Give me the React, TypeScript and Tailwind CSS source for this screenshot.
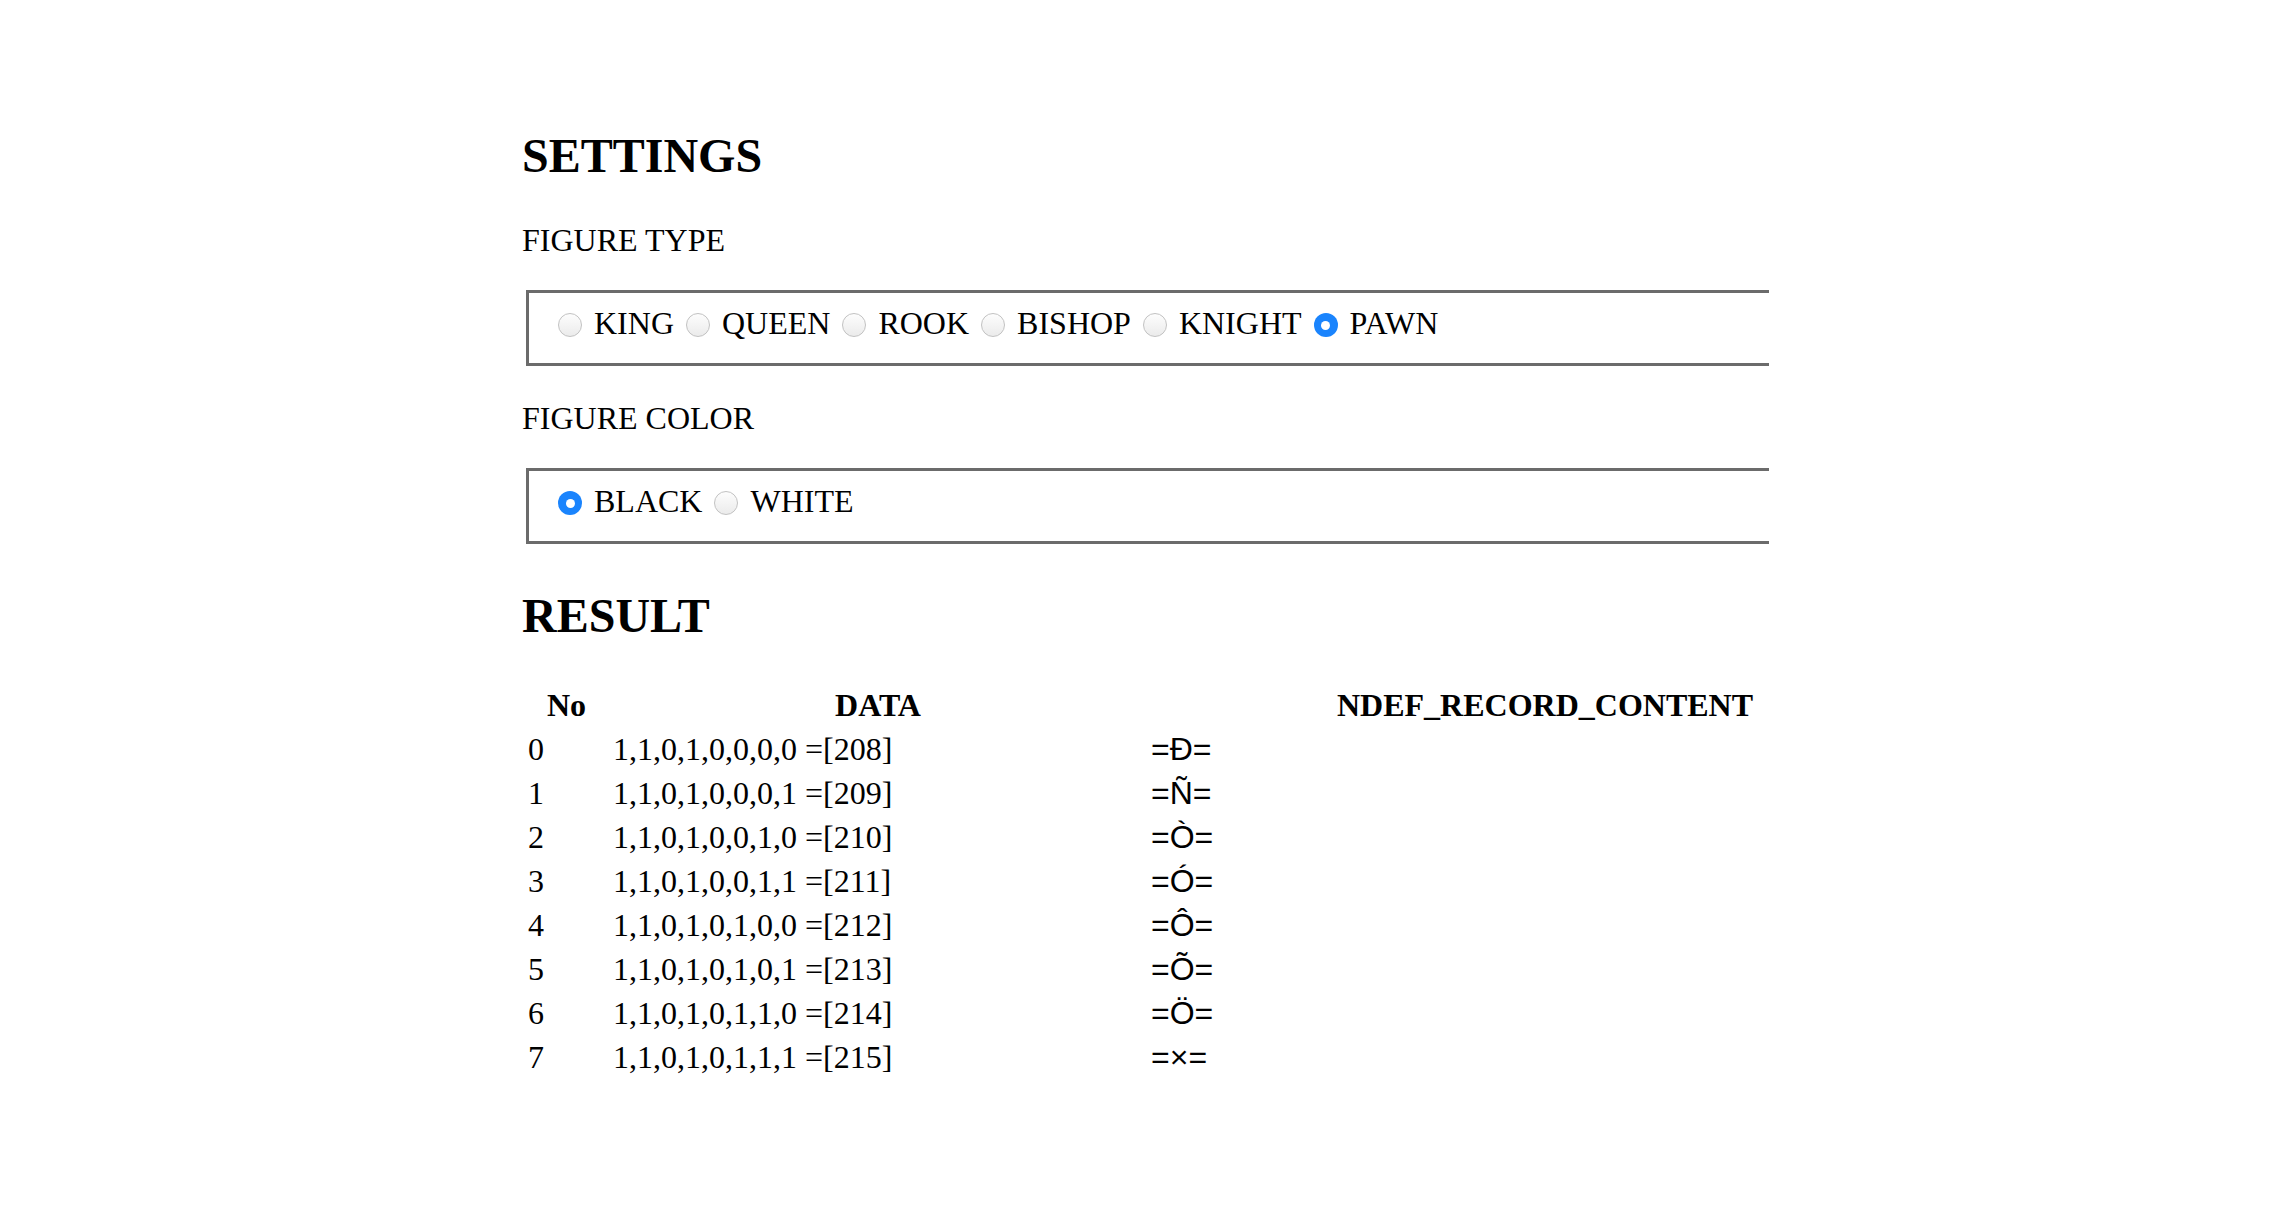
import React from "react";

function Radio({ checked }: { checked?: boolean }) {
  return checked ? (
    <span className="flex h-[24px] w-[24px] shrink-0 items-center justify-center rounded-full bg-[#1a84fd]">
      <span className="block h-[9px] w-[9px] rounded-full bg-white" />
    </span>
  ) : (
    <span className="block h-[24px] w-[24px] shrink-0 rounded-full border border-[#c2c2c2] bg-[linear-gradient(#fdfdfd,#ebebeb)]" />
  );
}

function Option({ label, checked }: { label: string; checked?: boolean }) {
  return (
    <label className="mr-[12px] flex items-center">
      <span className="mt-[4px] mr-[12px] flex shrink-0 items-center">
        <Radio checked={checked} />
      </span>
      <span>{label}</span>
    </label>
  );
}

function Group({ items, selected }: { items: string[]; selected: string }) {
  return (
    <div className="mt-[32px] ml-[4px] h-[76px] w-[1243px] border-y-[3px] border-l-[3px] border-[#6b6b6b] pt-[12px] pl-[29px]">
      <div className="flex h-[36px] items-center leading-[36px]">
        {items.map((it) => (
          <Option key={it} label={it} checked={it === selected} />
        ))}
      </div>
    </div>
  );
}

const rows = [
  { bits: "1,1,0,1,0,0,0,0", code: 208, ch: "Ð" },
  { bits: "1,1,0,1,0,0,0,1", code: 209, ch: "Ñ" },
  { bits: "1,1,0,1,0,0,1,0", code: 210, ch: "Ò" },
  { bits: "1,1,0,1,0,0,1,1", code: 211, ch: "Ó" },
  { bits: "1,1,0,1,0,1,0,0", code: 212, ch: "Ô" },
  { bits: "1,1,0,1,0,1,0,1", code: 213, ch: "Õ" },
  { bits: "1,1,0,1,0,1,1,0", code: 214, ch: "Ö" },
  { bits: "1,1,0,1,0,1,1,1", code: 215, ch: "×" },
];

export default function App() {
  return (
    <div className="min-h-[1210px] w-full bg-white font-['Liberation_Serif',serif] text-[32px] leading-[36px] text-black">
      <div className="ml-[522px] pt-[128px] pb-[60px]">
        <h2 className="text-[48px] leading-[56px] font-bold">SETTINGS</h2>
        <div className="mt-[38px] leading-[36px]">FIGURE TYPE</div>
        <Group
          items={["KING", "QUEEN", "ROOK", "BISHOP", "KNIGHT", "PAWN"]}
          selected="PAWN"
        />
        <div className="mt-[34px] leading-[36px]">FIGURE COLOR</div>
        <Group items={["BLACK", "WHITE"]} selected="BLACK" />
        <h2 className="mt-[44px] text-[48px] leading-[56px] font-bold">RESULT</h2>
        <table className="mt-[37px] w-[1423px] table-fixed border-separate border-spacing-[4px]">
          <colgroup>
            <col className="w-[81px]" />
            <col className="w-[534px]" />
            <col className="w-[792px]" />
          </colgroup>
          <thead>
            <tr>
              <th className="p-[2px] text-center font-bold leading-[36px]">No</th>
              <th className="p-[2px] text-center font-bold leading-[36px]">DATA</th>
              <th className="p-[2px] text-center font-bold leading-[36px]">NDEF_RECORD_CONTENT</th>
            </tr>
          </thead>
          <tbody>
            {rows.map((r, i) => (
              <tr key={i}>
                <td className="p-[2px] text-left leading-[36px]">{i}</td>
                <td className="p-[2px] text-left leading-[36px]">
                  {r.bits} =[{r.code}]
                </td>
                <td className="p-[2px] text-left font-['Liberation_Sans',Arial,sans-serif] leading-[36px]">
                  ={r.ch}=
                </td>
              </tr>
            ))}
          </tbody>
        </table>
      </div>
    </div>
  );
}
